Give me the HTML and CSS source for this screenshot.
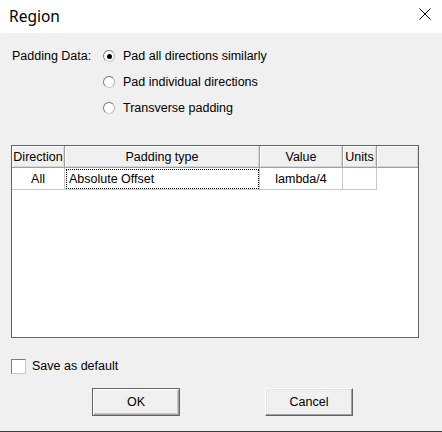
FILE: index.html
```html
<!DOCTYPE html>
<html>
<head>
<meta charset="utf-8">
<link rel="stylesheet" href="styles.css">
</head>
<body>
<div class="window">
  <div class="titlebar">
    <span class="title">Region</span>
    <svg class="close" width="12" height="12" viewBox="0 0 12 12"><path d="M0.5 0.5 L11.5 11.5 M11.5 0.5 L0.5 11.5" stroke="#000" stroke-width="1" fill="none"/></svg>
  </div>
  <div class="body">
    <div class="options">
      <div class="label">Padding Data:</div>
      <div class="radios">
        <div class="opt"><span class="radio checked"></span><span>Pad all directions similarly</span></div>
        <div class="opt"><span class="radio"></span><span>Pad individual directions</span></div>
        <div class="opt"><span class="radio"></span><span>Transverse padding</span></div>
      </div>
    </div>
    <div class="grid">
      <div class="hcell">Direction</div>
      <div class="hcell">Padding type</div>
      <div class="hcell">Value</div>
      <div class="hcell">Units</div>
      <div class="hcell filler"></div>
      <div class="cell center">All</div>
      <div class="cell"><span class="focus">Absolute Offset</span></div>
      <div class="cell center">lambda/4</div>
      <div class="cell"></div>
      <div class="cell blank"></div>
    </div>
    <div class="check">
      <span class="box"></span><span>Save as default</span>
    </div>
    <div class="buttons">
      <div class="btn default">OK</div>
      <div class="btn">Cancel</div>
    </div>
  </div>
</div>
</body>
</html>
```

FILE: styles.css
```css
html, body {
  margin: 0;
  padding: 0;
}
body {
  width: 442px;
  height: 432px;
  overflow: hidden;
  background: #f0f0f0;
  font-family: "Liberation Sans", Arial, sans-serif;
  font-size: 12.5px;
  color: #000;
}
.window {
  width: 442px;
  height: 432px;
  box-sizing: border-box;
  border-bottom: 1px solid #3c3c3c;
  display: flex;
  flex-direction: column;
}
.titlebar {
  height: 33px;
  flex: none;
  background: #fff;
  display: flex;
  align-items: center;
  justify-content: space-between;
  padding: 0 11px 0 9px;
}
.title {
  font-family: "Noto Sans", "Open Sans", sans-serif;
  font-size: 15.5px;
  line-height: 20px;
  margin-top: -2px;
}
.close {
  display: block;
  margin-top: -5px;
}
.body {
  padding: 13px 0 0 11px;
}
.options {
  display: flex;
}
.label {
  width: 91px;
  padding-left: 1px;
  line-height: 20px;
}
.radios {
  display: flex;
  flex-direction: column;
  gap: 6px;
}
.opt {
  display: flex;
  align-items: center;
  height: 20px;
  gap: 8px;
}
.radio {
  width: 12px;
  height: 12px;
  box-sizing: border-box;
  border-radius: 50%;
  border: 1px solid;
  border-color: #6e6e6e #b4b4b4 #c8c8c8 #7c7c7c;
  background: #fff;
  display: flex;
  align-items: center;
  justify-content: center;
}
.radio.checked::after {
  content: "";
  width: 5px;
  height: 5px;
  border-radius: 50%;
  background: #000;
}
.grid {
  margin-top: 27px;
  width: 408px;
  height: 193px;
  box-sizing: border-box;
  border: 1px solid #646464;
  background: #fff;
  display: grid;
  grid-template-columns: 53px 195px 83px 34px 1fr;
  grid-template-rows: 22px 22px;
  align-content: start;
}
.hcell {
  background: #f0f0f0;
  box-sizing: border-box;
  border-right: 1px solid #a0a0a0;
  border-bottom: 1px solid #a0a0a0;
  box-shadow: inset 1px 1px 0 #fff, inset -1px -1px 0 #d8d8d8;
  display: flex;
  align-items: center;
  justify-content: center;
  white-space: nowrap;
  overflow: hidden;
}
.hcell.filler {
  border-right: none;
}
.cell {
  box-sizing: border-box;
  border-right: 1px solid #c8c8c8;
  border-bottom: 1px solid #c8c8c8;
  display: flex;
  align-items: center;
  white-space: nowrap;
}
.cell.center {
  justify-content: center;
}
.cell.blank {
  border: none;
}
.focus {
  display: flex;
  align-items: center;
  box-sizing: border-box;
  width: 193px;
  height: 20px;
  margin-left: 1px;
  padding-left: 2px;
  border: 1px dotted #000;
}
.check {
  margin-top: 20px;
  display: flex;
  align-items: center;
  gap: 6px;
  height: 16px;
}
.box {
  width: 15px;
  height: 15px;
  box-sizing: border-box;
  border: 1px solid #8a8a8a;
  border-color: #7a7a7a #c8c8c8 #c8c8c8 #7a7a7a;
  background: #fff;
}
.buttons {
  margin-top: 14px;
  display: flex;
  gap: 85px;
  padding-left: 81px;
}
.btn {
  width: 88px;
  height: 28px;
  box-sizing: border-box;
  display: flex;
  align-items: center;
  justify-content: center;
  background: #f0f0f0;
  border: 1px solid;
  border-color: #fff #646464 #646464 #fff;
  box-shadow: inset -1px -1px 0 #a0a0a0, inset 1px 1px 0 #e3e3e3;
}
.btn.default {
  border-color: #646464;
  box-shadow: inset 1px 1px 0 #fff, inset -1px -1px 0 #a0a0a0, inset -2px -2px 0 #c8c8c8;
}
```
